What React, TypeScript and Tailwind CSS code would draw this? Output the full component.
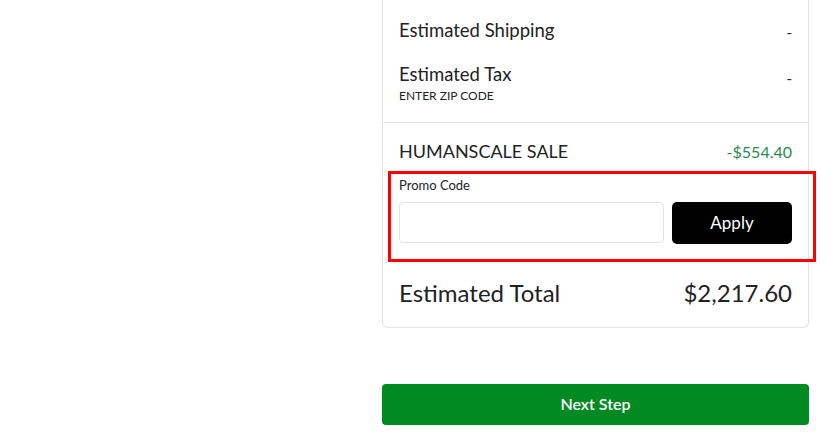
import React from 'react';

export default function App() {
  return (
    <div className="min-h-screen bg-white font-['Lato','Open_Sans',sans-serif] text-[#222]">
      <div className="flex">
        <div className="w-[382px] shrink-0" />
        <div className="w-[427px]">
          <div className="relative rounded-b-md border-x border-b border-[#e3e3e3]">
            <div className="px-4 pt-[17px] pb-[18px]">
              <div className="flex items-center justify-between">
                <span className="text-[18.5px] leading-6">Estimated Shipping</span>
                <span className="mt-1 text-[15px]">-</span>
              </div>
              <div className="mt-[19px] flex justify-between">
                <div>
                  <div className="text-[18.5px] leading-[22px]">Estimated Tax</div>
                  <div className="mt-[3px] text-[12px] leading-4">ENTER ZIP CODE</div>
                </div>
                <span className="mt-1 text-[15px]">-</span>
              </div>
            </div>
            <div className="border-t border-[#e3e3e3] px-4 pt-[15px] pb-[18px]">
              <div className="flex items-center justify-between">
                <span className="text-[18px] leading-6">HUMANSCALE SALE</span>
                <span className="mt-0.5 text-[16px] text-[#2a8a4f]">-$554.40</span>
              </div>
              <div className="mt-[13px] text-[13px] leading-4">Promo Code</div>
              <div className="mt-[9px] flex gap-2">
                <input className="h-[41px] flex-1 rounded border border-[#e3e3e3] px-3 outline-none" />
                <button className="h-[42px] w-[120px] rounded-[5px] bg-black text-[17px] text-white">Apply</button>
              </div>
              <div className="mt-[33px] flex items-center justify-between text-[24px] leading-8">
                <span>Estimated Total</span>
                <span>$2,217.60</span>
              </div>
            </div>
            <div className="pointer-events-none absolute left-[5px] top-[171px] h-[91px] w-[428px] border-[3px] border-[#ff0000]" />
          </div>
          <button className="mt-[56px] h-[41px] w-full rounded bg-[#028a22] text-[16px] font-semibold text-white">Next Step</button>
        </div>
      </div>
    </div>
  );
}
